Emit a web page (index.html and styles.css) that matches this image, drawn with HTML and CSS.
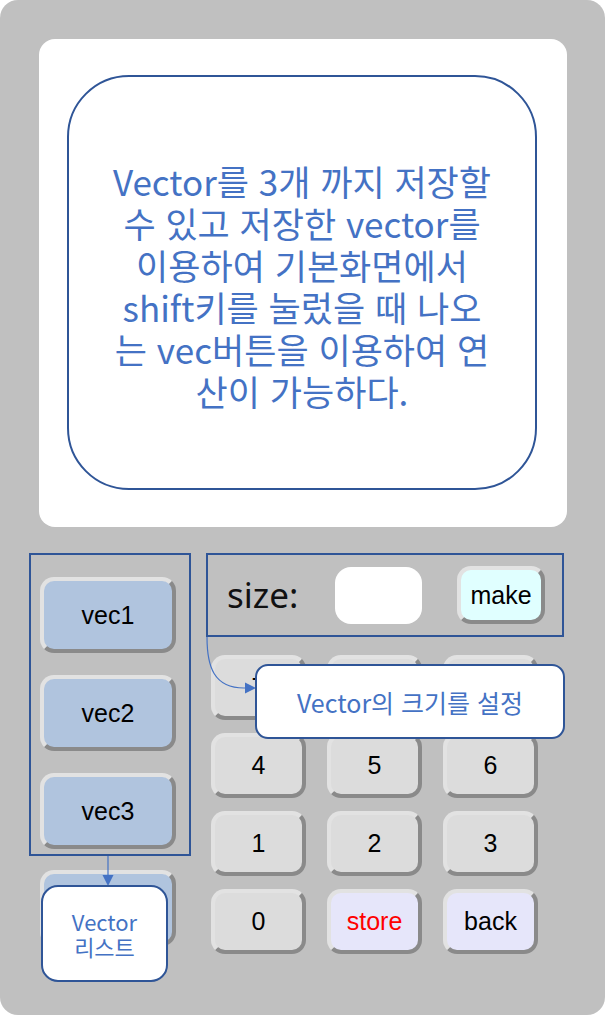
FILE: index.html
```html
<!DOCTYPE html>
<html lang="ko">
<head>
<meta charset="utf-8">
<title>Vector</title>
<link rel="stylesheet" href="styles.css">
</head>
<body>
<div class="panel">
  <div class="screen">
    <div class="bubble">
      <p class="bubble-text">Vector를 3개 까지 저장할<br>수 있고 저장한 vector를<br>이용하여 기본화면에서<br>shift키를 눌렀을 때 나오<br>는 vec버튼을 이용하여 연<br>산이 가능하다.</p>
    </div>
  </div>
  <div class="lower">
    <div class="left-col">
      <div class="vec-list">
        <button class="btn vec">vec1</button>
        <button class="btn vec">vec2</button>
        <button class="btn vec">vec3</button>
      </div>
      <button class="btn vec extra"></button>
    </div>
    <div class="right-col">
      <div class="size-row">
        <span class="size-label">size:</span>
        <div class="size-input"></div>
        <button class="btn make">make</button>
      </div>
      <div class="keypad">
        <button class="btn key">7</button>
        <button class="btn key">8</button>
        <button class="btn key">9</button>
        <button class="btn key">4</button>
        <button class="btn key">5</button>
        <button class="btn key">6</button>
        <button class="btn key">1</button>
        <button class="btn key">2</button>
        <button class="btn key">3</button>
        <button class="btn key">0</button>
        <button class="btn key alt store">store</button>
        <button class="btn key alt">back</button>
      </div>
    </div>
  </div>

  <svg class="connector conn-size" width="60" height="60" viewBox="0 0 60 60">
    <path d="M1 0 C1 30 8 51 38 51 L40 51" fill="none" stroke="#4472C4" stroke-width="1.2"/>
    <polygon points="39,45.5 50,51 39,56.5" fill="#4472C4"/>
  </svg>
  <svg class="connector conn-list" width="14" height="32" viewBox="0 0 14 32">
    <line x1="7" y1="0" x2="7" y2="20" stroke="#4472C4" stroke-width="1.2"/>
    <polygon points="1.5,19 12.5,19 7,30" fill="#4472C4"/>
  </svg>

  <div class="callout callout-size">Vector의 크기를 설정</div>
  <div class="callout callout-list">Vector<br>리스트</div>
</div>
</body>
</html>
```

FILE: styles.css
```css
* { box-sizing: border-box; }

html, body {
  margin: 0;
  padding: 0;
  background: #ffffff;
}

.panel {
  position: relative;
  width: 605px;
  height: 1015px;
  background: #c0c0c0;
  border-radius: 18px;
  padding: 39px 0 0 29px;
}

.screen {
  margin-left: 10px;
  width: 528px;
  height: 488px;
  background: #ffffff;
  border-radius: 16px;
  padding: 36px 0 0 28px;
}

.bubble {
  width: 470px;
  height: 415px;
  border: 2px solid #2f5597;
  border-radius: 62px;
  display: flex;
  align-items: center;
  justify-content: center;
  padding-top: 6px;
}

.bubble-text {
  margin: 0;
  text-align: center;
  color: #4472c4;
  font-family: "Noto Sans CJK KR", "Noto Sans", sans-serif;
  font-size: 35px;
  line-height: 42px;
  letter-spacing: 0;
  white-space: nowrap;
}

.lower {
  margin-top: 26px;
  display: grid;
  grid-template-columns: 162px 358px;
  column-gap: 15px;
  align-items: start;
}

.btn {
  display: flex;
  align-items: center;
  justify-content: center;
  margin: 0;
  padding: 0;
  font-family: "Liberation Sans", Arial, sans-serif;
  font-size: 25px;
  color: #000000;
  border-style: solid;
  border-width: 4px;
  border-color: #e2e2e2 #8a8a8a #8a8a8a #e2e2e2;
  border-radius: 14px;
}

.vec-list {
  height: 303px;
  border: 2px solid #2f5597;
  padding: 22px 0 0 9px;
  display: flex;
  flex-direction: column;
  gap: 22px;
}

.vec {
  width: 136px;
  height: 76px;
  background: #b0c4de;
}

.extra {
  margin: 14px 0 0 11px;
  height: 76px;
}

.size-row {
  height: 84px;
  border: 2px solid #2f5597;
  display: flex;
  align-items: center;
  padding-left: 19px;
}

.size-label {
  font-family: "Noto Sans", "Open Sans", sans-serif;
  font-size: 35px;
  color: #111111;
  width: 108px;
  margin-top: -2px;
}

.size-input {
  width: 87px;
  height: 57px;
  background: #ffffff;
  border-radius: 16px;
}

.make {
  margin-left: 35px;
  width: 88px;
  height: 58px;
  background: #e0ffff;
  font-size: 25px;
}

.keypad {
  margin-top: 18px;
  padding-left: 5px;
  display: grid;
  grid-template-columns: repeat(3, 95px);
  grid-auto-rows: 65px;
  column-gap: 21px;
  row-gap: 13px;
}

.key {
  background: #dcdcdc;
  border-color: #e2e2e2 #8a8a8a #8a8a8a #e2e2e2;
  font-size: 25px;
}

.alt {
  background: #e6e6fa;
}

.store {
  color: #ff0000;
}

.connector {
  position: absolute;
}

.conn-size {
  left: 206px;
  top: 637px;
}

.conn-list {
  left: 101px;
  top: 856px;
}

.callout {
  position: absolute;
  background: #ffffff;
  border: 2px solid #2f5597;
  color: #4472c4;
  font-family: "Noto Sans CJK KR", "Noto Sans", sans-serif;
  display: flex;
  align-items: center;
  justify-content: center;
  text-align: center;
}

.callout-size {
  left: 255px;
  top: 664px;
  width: 310px;
  height: 75px;
  border-radius: 13px;
  font-size: 25px;
}

.callout-list {
  left: 41px;
  top: 885px;
  width: 127px;
  height: 97px;
  border-radius: 17px;
  font-size: 22px;
  line-height: 25px;
}
```
